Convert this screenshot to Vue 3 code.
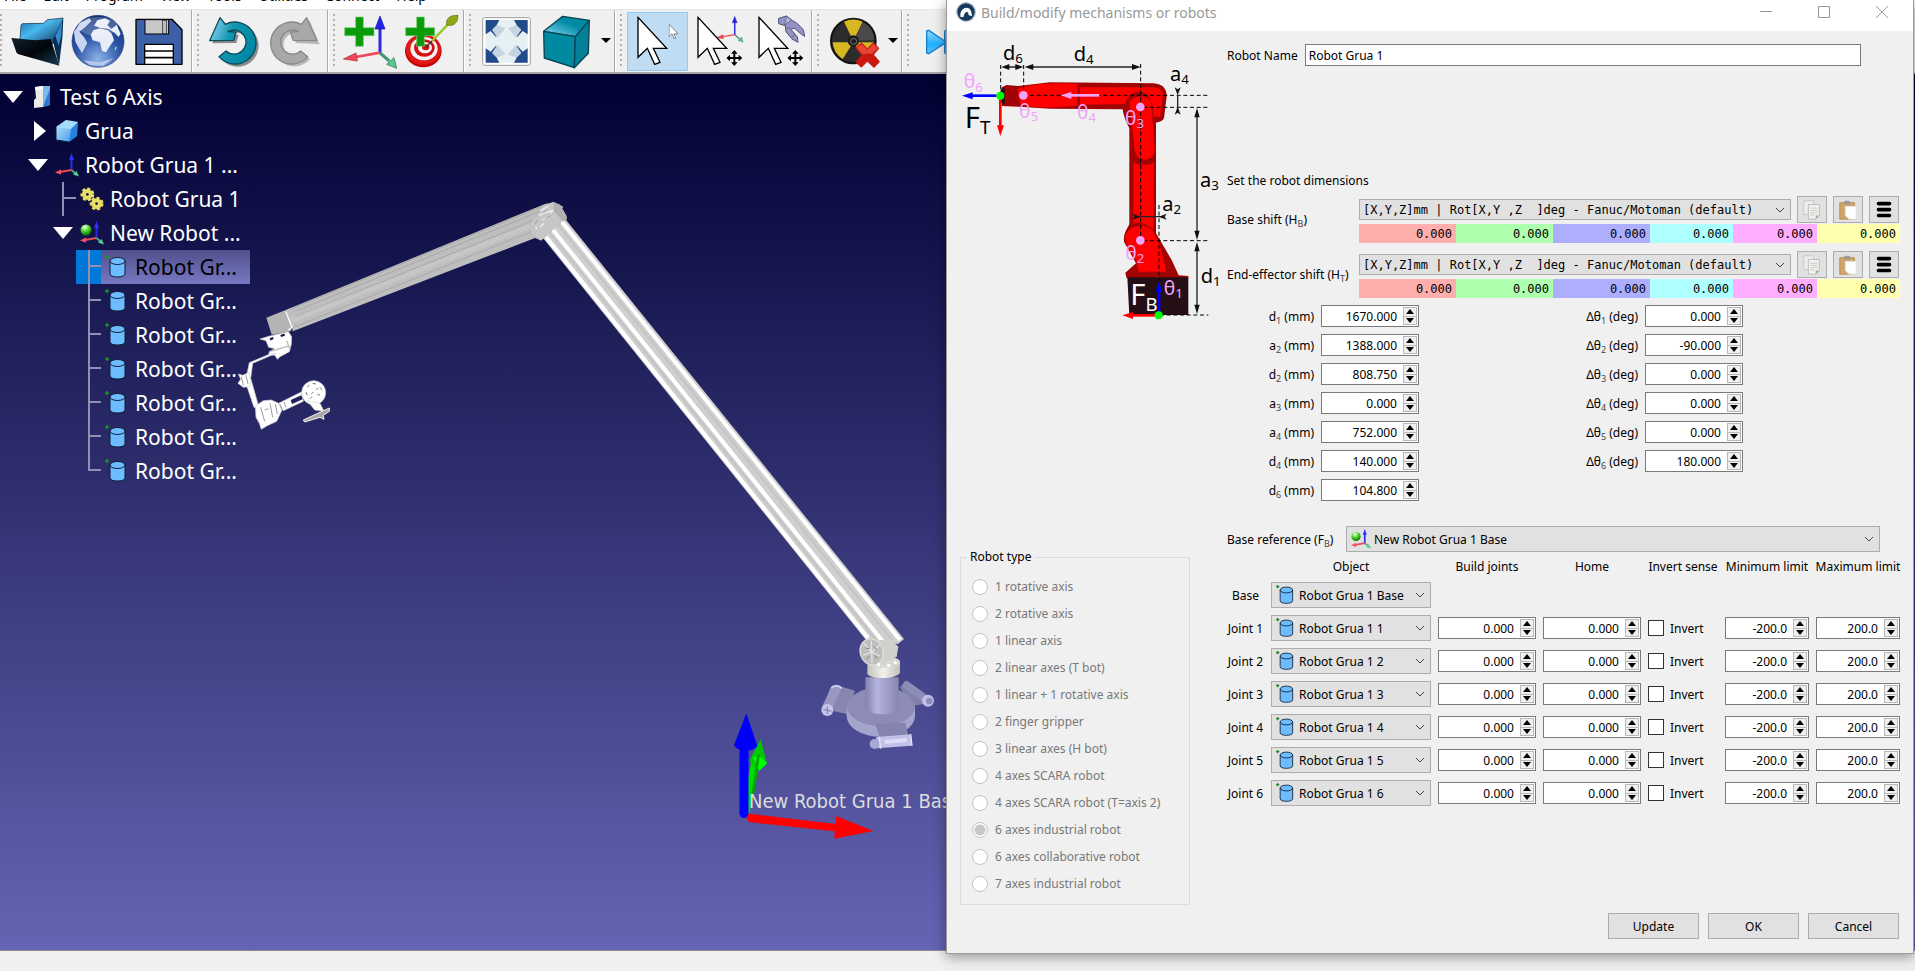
<script setup>
import { ref, reactive } from 'vue'

const menus = ['File', 'Edit', 'Program', 'View', 'Tools', 'Utilities', 'Connect', 'Help']

const toolGroups = [
  { id: 'file', tools: [
    { id: 'open', label: 'Open' },
    { id: 'globe', label: 'Open online library' },
    { id: 'save', label: 'Save station' }] },
  { id: 'history', tools: [
    { id: 'undo', label: 'Undo' },
    { id: 'redo', label: 'Redo' }] },
  { id: 'add', tools: [
    { id: 'frame', label: 'Add reference frame' },
    { id: 'target', label: 'Add target' }] },
  { id: 'view', tools: [
    { id: 'fit', label: 'Fit all' },
    { id: 'cube', label: 'Isometric view', drop: true }] },
  { id: 'select', tools: [
    { id: 'pick', label: 'Select', active: true },
    { id: 'moveframe', label: 'Move reference frame' },
    { id: 'movetool', label: 'Move tool' }] },
  { id: 'check', tools: [
    { id: 'collision', label: 'Check collisions', drop: true }] },
  { id: 'run', tools: [
    { id: 'fast', label: 'Fast simulation' }] }
]

const tree = [
  { level: 0, arrow: 'down', icon: 'station', text: 'Test 6 Axis' },
  { level: 1, arrow: 'right', icon: 'part', text: 'Grua' },
  { level: 1, arrow: 'down', icon: 'axes', text: 'Robot Grua 1 ...' },
  { level: 2, branch: 'tee', icon: 'gears', text: 'Robot Grua 1' },
  { level: 2, arrow: 'down', icon: 'baseframe', text: 'New Robot ...' },
  { level: 3, branch: 'tee', icon: 'cyl', text: 'Robot Gr...', selected: true },
  { level: 3, branch: 'tee', icon: 'cyl', text: 'Robot Gr...' },
  { level: 3, branch: 'tee', icon: 'cyl', text: 'Robot Gr...' },
  { level: 3, branch: 'tee', icon: 'cyl', text: 'Robot Gr...' },
  { level: 3, branch: 'tee', icon: 'cyl', text: 'Robot Gr...' },
  { level: 3, branch: 'tee', icon: 'cyl', text: 'Robot Gr...' },
  { level: 3, branch: 'end', icon: 'cyl', text: 'Robot Gr...' }
]

const robotTypes = [
  '1 rotative axis', '2 rotative axis', '1 linear axis', '2 linear axes (T bot)',
  '1 linear + 1 rotative axis', '2 finger gripper', '3 linear axes (H bot)',
  '4 axes SCARA robot', '4 axes SCARA robot (T=axis 2)', '6 axes industrial robot',
  '6 axes collaborative robot', '7 axes industrial robot'
]
const robotType = ref('6 axes industrial robot')
const robotName = ref('Robot Grua 1')

const poseFormat = '[X,Y,Z]mm | Rot[X,Y ,Z\u00a0\u00a0]deg - Fanuc/Motoman (default)'
const shifts = reactive([
  { id: 'hb', name: 'Base shift', sym: 'H', sub: 'B', values: Array(6).fill('0.000') },
  { id: 'ht', name: 'End-effector shift', sym: 'H', sub: 'T', values: Array(6).fill('0.000') }
])

const lengths = reactive([
  { sym: 'd', sub: '1', value: '1670.000' },
  { sym: 'a', sub: '2', value: '1388.000' },
  { sym: 'd', sub: '2', value: '808.750' },
  { sym: 'a', sub: '3', value: '0.000' },
  { sym: 'a', sub: '4', value: '752.000' },
  { sym: 'd', sub: '4', value: '140.000' },
  { sym: 'd', sub: '6', value: '104.800' }
])
const angles = reactive([
  { sub: '1', value: '0.000' },
  { sub: '2', value: '-90.000' },
  { sub: '3', value: '0.000' },
  { sub: '4', value: '0.000' },
  { sub: '5', value: '0.000' },
  { sub: '6', value: '180.000' }
])

const joints = reactive([1, 2, 3, 4, 5, 6].map(n => ({
  n, object: 'Robot Grua 1 ' + n, build: '0.000', home: '0.000', invert: false, min: '-200.0', max: '200.0'
})))

function step(row, key, by) {
  const digits = (row[key].split('.')[1] || '').length
  row[key] = (parseFloat(row[key]) + by).toFixed(digits)
}
</script>

<template>
  <div class="desktop">
    <svg class="sprite" width="0" height="0" aria-hidden="true">
      <defs>
        <linearGradient id="gFolder" x1="0" y1="0" x2="1" y2="1"><stop offset="0" stop-color="#1b6ba8" /><stop offset=".4" stop-color="#49b8f0" /><stop offset="1" stop-color="#0a2c50" /></linearGradient>
        <linearGradient id="gFront" x1="0" y1="0" x2="1" y2="1"><stop offset="0" stop-color="#123" /><stop offset=".5" stop-color="#020408" /><stop offset="1" stop-color="#173a55" /></linearGradient>
        <radialGradient id="gGlobe" cx=".5" cy=".85" r=".9"><stop offset="0" stop-color="#8fb4e8" /><stop offset=".5" stop-color="#2c55a5" /><stop offset="1" stop-color="#0d2a6c" /></radialGradient>
        <linearGradient id="gUndo" x1="0" y1="0" x2="1" y2=".4"><stop offset="0" stop-color="#9fe0ff" /><stop offset=".5" stop-color="#1296b0" /><stop offset="1" stop-color="#0088a4" /></linearGradient>
        <linearGradient id="gTop" x1="0" y1="1" x2="1" y2="0"><stop offset="0" stop-color="#8fdcff" /><stop offset=".6" stop-color="#008aa4" /></linearGradient>
        <linearGradient id="gPart" x1="0" y1="0" x2="1" y2="1"><stop offset="0" stop-color="#c9ebff" /><stop offset="1" stop-color="#2f8fe6" /></linearGradient>
        <linearGradient id="gPlay" x1="0" y1="0" x2="0" y2="1"><stop offset="0" stop-color="#8fdcff" /><stop offset=".6" stop-color="#21b0ff" /><stop offset="1" stop-color="#5cc6ff" /></linearGradient>
        <radialGradient id="gBall" cx=".4" cy=".25" r=".7"><stop offset="0" stop-color="#fff" /><stop offset=".45" stop-color="#5fe03a" /><stop offset="1" stop-color="#0f7d08" /></radialGradient>
        <linearGradient id="gCyl" x1="0" y1="0" x2="1" y2="0"><stop offset="0" stop-color="#8282ac" /><stop offset=".35" stop-color="#b4b4de" /><stop offset="1" stop-color="#8686ae" /></linearGradient>
        <linearGradient id="gCollar" x1="0" y1="0" x2="1" y2="0"><stop offset="0" stop-color="#c4c4bc" /><stop offset=".5" stop-color="#f2f2ee" /><stop offset="1" stop-color="#c0c0b8" /></linearGradient>
      </defs>

      <symbol id="t-open" viewBox="21 33 183 177">
        <path d="M63 72 67 68 130 67 142 56 189 51 184 120 150 130 60 116Z" fill="url(#gFolder)" stroke="#0a2540" stroke-width="2" />
        <path d="M158 116 189 54 187 110 177 194 166 150Z" fill="#0c2c50" />
        <path d="M166 104 186 62 184 104 176 134Z" fill="#3488cc" />
        <path d="M34 111 60 113 104 118 152 114 178 194 56 160 50 156Z" fill="url(#gFront)" />
      </symbol>
      <symbol id="t-globe" viewBox="204 33 183 177">
        <circle cx="294" cy="121" r="78" fill="url(#gGlobe)" stroke="#1b3a86" stroke-width="2" />
        <path d="M272 102 280 88 300 82 324 88 336 100 342 118 330 134 318 154 306 150 300 124 278 118Z" fill="#e8ecf8" />
        <path d="M282 74 292 58 316 52 330 60 322 72 334 84 350 72 362 98 356 108 344 96 326 84 300 80Z" fill="#e8ecf8" />
        <path d="M222 92 240 66 268 52 274 60 256 78 238 92 252 108 262 126 246 156 236 140 226 122Z" fill="#c8d4f0" />
        <path d="M344 140 352 136 346 150ZM250 178 300 184 340 172 310 194 270 192Z" fill="#b8c8ea" />
        <ellipse cx="294" cy="76" rx="60" ry="28" fill="#fff" opacity=".22" />
      </symbol>
      <symbol id="t-save" viewBox="387 33 183 177">
        <path d="M408 55H516L546 86V190H408Z" fill="#3c60a8" stroke="#000" stroke-width="4" stroke-linejoin="round" />
        <rect x="435" y="56" width="71" height="43" fill="#c8c8c8" stroke="#000" stroke-width="3" />
        <rect x="487" y="58" width="13" height="39" fill="#bbb" stroke="#222" stroke-width="2" />
        <path d="M434 130H520V190H434Z" fill="#fff" stroke="#000" stroke-width="4" />
        <path d="M434 150H520M434 170H520" stroke="#000" stroke-width="5" />
      </symbol>
      <symbol id="t-undo" viewBox="612 33 183 177">
        <path d="M629 119 660 50 676 70A63 63 0 1 1 657 167L678 150A36 36 0 1 0 684 92L708 93 701 118Z" fill="#8a8a8a" transform="translate(8 8)" />
        <path d="M629 119 660 50 676 70A63 63 0 1 1 657 167L678 150A36 36 0 1 0 684 92L708 93 701 118Z" fill="url(#gUndo)" stroke="#0a4c5c" stroke-width="4" stroke-linejoin="round" />
      </symbol>
      <symbol id="t-redo" viewBox="795 33 183 177">
        <path d="M959 130 928 58 912 77A63 63 0 1 0 930 175L912 157A36 36 0 1 1 904 100L880 100 887 126Z" fill="#b8b8b8" />
        <path d="M951 119 920 50 904 70A63 63 0 1 0 923 167L902 150A36 36 0 1 1 896 92L872 93 879 118Z" fill="#a8a8a8" stroke="#888" stroke-width="4" stroke-linejoin="round" />
      </symbol>
      <symbol id="triad" viewBox="1020 33 183 177">
        <path d="M1140 158V76" stroke="#2b2be0" stroke-width="9" /><path d="M1140 45 1155 84H1125Z" fill="#2424e8" stroke="#1414a0" stroke-width="2" />
        <path d="M1140 155 1068 168" stroke="#f04858" stroke-width="8" /><path d="M1030 174 1068 156 1072 180Z" fill="#f04858" stroke="#a02030" stroke-width="2" />
        <path d="M1140 156 1168 180" stroke="#3f9a70" stroke-width="9" /><path d="M1190 202 1160 190 1182 170Z" fill="#58c890" stroke="#1f6a48" stroke-width="2" />
      </symbol>
      <symbol id="t-frame" viewBox="1020 33 183 177">
        <use href="#triad" x="1020" y="33" width="183" height="177" />
        <path d="M1067 48H1090V80H1122V104H1090V136H1067V104H1034V80H1067Z" fill="#0a9a0a" stroke="#6fd06f" stroke-width="2" />
      </symbol>
      <symbol id="t-target" viewBox="1203 33 183 177">
        <ellipse cx="1270" cy="150" rx="55" ry="49" fill="#c80000" />
        <ellipse cx="1270" cy="145" rx="53" ry="46" fill="#e01818" />
        <ellipse cx="1272" cy="143" rx="41" ry="35" fill="#f4f4f4" />
        <ellipse cx="1273" cy="141" rx="31" ry="26" fill="#d41010" />
        <ellipse cx="1275" cy="140" rx="21" ry="17" fill="#f4f4f4" />
        <ellipse cx="1277" cy="139" rx="11" ry="9" fill="#d41010" />
        <path d="M1250 48H1273V80H1304V104H1273V136H1250V104H1217V80H1250Z" fill="#0a9a0a" stroke="#6fd06f" stroke-width="2" />
        <path d="M1276 140 1300 116" stroke="#333" stroke-width="4" /><path d="M1296 120 1346 68" stroke="#9ac820" stroke-width="7" />
        <path d="M1340 72C1336 50 1354 42 1374 43C1374 62 1364 78 1340 72Z" fill="#8fa818" stroke="#5a6c10" stroke-width="2" />
      </symbol>
      <symbol id="t-fit" viewBox="18 33 183 177">
        <rect x="38" y="50" width="143" height="143" rx="6" fill="#fff" stroke="#a0a0a0" stroke-width="3" />
        <rect x="47" y="57" width="126" height="128" fill="#e6f0f2" />
        <path d="M47 57H88L80 72 96 88 78 108 62 90 47 100ZM173 57H132L140 72 124 88 142 108 158 90 173 100ZM47 185H88L80 170 96 154 78 134 62 152 47 142ZM173 185H132L140 170 124 154 142 134 158 152 173 142Z" fill="#204a8a" />
        <path d="M80 72 66 86 82 110 106 82ZM140 72 154 86 138 110 114 82ZM80 170 66 156 82 132 106 160ZM140 170 154 156 138 132 114 160Z" fill="#c4d4e2" />
      </symbol>
      <symbol id="t-cube" viewBox="201 33 183 177">
        <g stroke="#0a4450" stroke-width="4" stroke-linejoin="round">
          <path d="M221 91 278 46 358 58 316 107Z" fill="url(#gTop)" />
          <path d="M221 91 316 107 313 200 223 171Z" fill="#008aa2" />
          <path d="M316 107 358 58 355 157 313 200Z" fill="#048098" />
        </g>
      </symbol>
      <symbol id="pointer" viewBox="0 0 100 150">
        <path d="M4 3V123L32 96 54 144 70 138 50 96H90Z" fill="#fff" stroke="#000" stroke-width="4" />
      </symbol>
      <symbol id="mover" viewBox="0 0 48 48">
        <path d="M24 0 34 11H27V21H37V14L48 24 37 34V27H27V37H34L24 48 14 37H21V27H11V34L0 24 11 14V21H21V11H14Z" />
      </symbol>
      <symbol id="t-pick" viewBox="471 33 183 177">
        <use href="#pointer" x="500" y="46" width="100" height="150" />
        <use href="#pointer" x="596" y="69" width="31" height="46" />
      </symbol>
      <symbol id="t-moveframe" viewBox="654 33 183 177">
        <use href="#triad" x="734" y="40" width="92" height="88" />
        <use href="#pointer" x="680" y="46" width="100" height="150" />
        <use href="#mover" x="769" y="147" width="48" height="48" />
      </symbol>
      <symbol id="t-movetool" viewBox="837 33 183 177">
        <path d="M926 52 950 45 966 58 980 66 1000 86 1004 106 994 100 974 82 962 84 982 108 984 124 966 114 948 92 946 74 926 68Z" fill="#9494c4" stroke="#50507c" stroke-width="3" />
        <path d="M950 46 964 58 944 72ZM950 82 960 80M974 100 966 108" fill="#b8b8dc" stroke="#50507c" stroke-width="2" />
        <use href="#pointer" x="863" y="46" width="100" height="150" />
        <use href="#mover" x="952" y="147" width="48" height="48" />
      </symbol>
      <symbol id="t-collision" viewBox="1062 33 183 177">
        <circle cx="1150" cy="120" r="67" fill="#2c2c2c" stroke="#111" stroke-width="6" />
        <path d="M1150 120 1122 62A64 64 0 0 1 1178 62ZM1150 124 1088 124A64 64 0 0 0 1118 174ZM1150 124 1212 124A64 64 0 0 1 1182 174Z" fill="#d8b820" />
        <path d="M1150 120 1180 64A62 62 0 0 1 1212 118Z" fill="#4a4a4a" />
        <circle cx="1150" cy="120" r="17" fill="#1c1c1c" /><circle cx="1151" cy="121" r="9" fill="none" stroke="#777" stroke-width="3" />
        <path d="M1156 140 1174 124 1192 142 1210 124 1228 142 1212 161 1230 182 1212 201 1192 182 1174 200 1156 184 1174 162Z" fill="#c81810" />
        <path d="M1160 140 1174 128 1192 146 1210 128 1224 142 1206 158H1176Z" fill="#e84438" />
      </symbol>
      <symbol id="t-fast" viewBox="1332 33 183 177">
        <path d="M1370 90 1376 88 1424 120V127L1376 158 1370 156Z" fill="url(#gPlay)" stroke="#1680d0" stroke-width="4" />
        <rect x="1424" y="88" width="24" height="70" rx="4" fill="url(#gPlay)" stroke="#1680d0" stroke-width="4" />
      </symbol>

      <symbol id="i-station" viewBox="0 0 24 24">
        <path d="M5 2 13 1V22L4 23V15L6 13Z" fill="#eceae6" /><path d="M5 2 13 1V4L5 5Z" fill="#fff" />
        <path d="M13 1H20V20L13 22Z" fill="#7ab8f0" /><path d="M16 14 20 4V20L13 22Z" fill="#2a78d0" />
      </symbol>
      <symbol id="i-part" viewBox="0 0 24 24">
        <path d="M1 8 11 1 23 3 22 17 14 23 1 21Z" fill="url(#gPart)" stroke="#0a1c38" />
        <path d="M1 8 11 1 23 3 16 10Z" fill="#a8dcff" /><path d="M16 10 23 3 22 17 14 23Z" fill="#2484e0" />
      </symbol>
      <symbol id="i-axes" viewBox="0 0 24 24">
        <path d="M16.500 18V6" stroke="#2a2ae8" stroke-width="2" /><path d="M16.500 0 19 7H14Z" fill="#3030f8" />
        <path d="M16.500 17 5 19" stroke="#f04858" stroke-width="2" /><path d="M0 19.500 6 16.500V21.500Z" fill="#ff5060" />
        <path d="M16.500 17 20 20" stroke="#48a878" stroke-width="2" /><path d="M24 23.500 18 21.500 21.500 18Z" fill="#58d090" />
      </symbol>
      <symbol id="i-baseframe" viewBox="0 0 24 24">
        <use href="#i-axes" width="24" height="24" /><circle cx="6" cy="9" r="5.500" fill="url(#gBall)" />
      </symbol>
      <symbol id="i-gears" viewBox="0 0 26 26">
        <g fill="#e6de68" stroke="#6a6414" stroke-width=".5">
          <circle cx="8" cy="8" r="6" /><circle cx="18" cy="18" r="6" />
        </g>
        <g fill="none" stroke="#e6de68" stroke-width="3" stroke-dasharray="3 2.500">
          <circle cx="8" cy="8" r="6" /><circle cx="18" cy="18" r="6" />
        </g>
        <g fill="#14144c"><circle cx="8" cy="8" r="1.500" /><circle cx="18" cy="18" r="1.500" /></g>
      </symbol>
      <symbol id="i-cyl" viewBox="0 0 24 24">
        <path d="M5 6V19C5 23 20 23 20 19V6" fill="#6cbcff" stroke="#0c1c30" />
        <ellipse cx="12.500" cy="6" rx="7.500" ry="3.500" fill="#6cbcff" stroke="#0c1c30" />
        <path d="M0 2H4M2 0V4" stroke="#18902c" stroke-width="1.500" />
      </symbol>
      <symbol id="i-copy" viewBox="0 0 24 24">
        <path d="M3 2H14V17H3Z" fill="#eee" stroke="#c4c4c4" /><path d="M8 6H20V18L16 22H8Z" fill="#f2f2ee" stroke="#b8b8b4" />
        <path d="M10 10H18M10 12.500H18M10 15H18M10 17.500H15" stroke="#c4c4c4" /><path d="M20 18H16V22Z" fill="#aaa" />
      </symbol>
      <symbol id="i-paste" viewBox="0 0 24 24">
        <path d="M3 4H19V22H3Z" fill="#d0a468" stroke="#b88c50" /><path d="M8 2H14V6H8Z" fill="#999" />
        <path d="M9 8H21V22H13L9 18Z" fill="#fff" stroke="#ddd" />
      </symbol>
      <symbol id="i-lines" viewBox="0 0 24 24">
        <path d="M6 5H18M6 11.500H18M6 18H18" stroke="#000" stroke-width="4" stroke-linecap="round" />
      </symbol>
    </svg>

    <div class="main">
      <nav class="menubar">
        <button v-for="m in menus" :key="m" type="button">{{ m }}</button>
      </nav>

      <div class="toolbar">
        <div v-for="g in toolGroups" :key="g.id" class="group">
          <span class="handle"></span>
          <button v-for="t in g.tools" :key="t.id" type="button" class="tool" :class="{ active: t.active, drop: t.drop }" :aria-label="t.label">
            <svg class="tool-icon" aria-hidden="true"><use :href="'#t-' + t.id" /></svg>
            <svg v-if="t.drop" class="tool-drop" viewBox="0 0 10 6" aria-hidden="true"><path d="M0 0H10L5 5Z" /></svg>
          </button>
        </div>
      </div>

      <section class="viewport">
        <svg class="scene" viewBox="0 74 946 876" aria-label="Robot Grua 1">
          <g transform="translate(220 190) scale(.333333)">
            <path d="M139 383 197 360 216 412 212 424 155 434Z" fill="#b4b4b4" />
            <path d="M197 360 975 42 1000 37 1030 50 960 150 945 144 218 424 216 412Z" fill="#bebebe" />
            <path d="M230 362 960 64M215 356 965 50M226 380 940 92M220 412 935 124" stroke="#a8a8a8" stroke-width="3" fill="none" />
            <path d="M216 392 930 108" stroke="#c6c6c6" stroke-width="14" />
            <path d="M197 364 216 412 205 420" stroke="#fff" stroke-width="4" fill="none" />
            <path d="M968 50 1000 36 1020 44 1040 78 1038 98 962 152 935 130 932 100 950 80Z" fill="#c6c6c6" />
            <path d="M1003 37 1022 46 1041 84 1034 98 1000 62Z" fill="#b0b0b0" />
            <path d="M962 62 986 48M956 76 1000 60M966 90 984 82M990 70 1000 62M944 102 950 118M972 100 960 112" stroke="#ececec" stroke-width="4" fill="none" />
            <path d="M970 70 980 60M950 92 944 110M976 86 990 78" stroke="#858585" stroke-width="2" fill="none" />
            <g fill="#fff" stroke="#d2d2d2" stroke-width="2">
              <path d="M120 447 150 438 205 425 215 440 214 462 208 485 180 500 172 508 165 496 146 494 148 485 165 476 146 472 138 452Z" />
              <path d="M168 490 98 520 92 565 118 656 102 652 76 575 88 518 150 492Z" />
              <path d="M55 552 68 556 86 548 92 572 90 590 70 592 54 580 62 568Z" />
              <path d="M106 648 130 632 154 630 176 640 186 660 170 694 140 708 124 718 118 700 108 682Z" />
              <path d="M176 640 244 606 250 634 190 662Z" />
              <circle cx="281" cy="608" r="36" />
              <path d="M262 632 300 640 312 664 284 660Z" />
            </g>
            <path d="M212 630 244 616 248 628 216 642Z" fill="#20205c" />
            <path d="M250 690 328 654 328 664 310 676 312 688 300 682 254 696Z" fill="#a8a8a4" stroke="#eee" stroke-width="3" />
            <path d="M150 448 160 444M182 438 194 434" stroke="#1a1a50" stroke-width="7" />
            <path d="M262 590 268 586M278 580 288 582M300 592 306 600M258 606 262 616M274 612 280 606M292 612 300 616M270 626 276 620M290 600 294 594" stroke="#777" stroke-width="3" />
            <path d="M122 652 134 694M150 640 158 682M166 642 172 672M134 660 146 656M180 642 186 658M192 636 198 652M64 560 70 586M78 556 84 582" stroke="#9a9a9a" stroke-width="3" />
            <path d="M200 452 210 478M152 484 206 468" stroke="#c0c0c0" stroke-width="4" />
          </g>
          <path d="M543 238 566 220 904 639 898 644 866 640Z" fill="#cfcfcf" />
          <path d="M546 237 868 638M553 230 884 643M562 222 900 640" stroke="#fff" stroke-width="4" />
          <path d="M549 232 876 640M558 225 892 640" stroke="#c4c4c4" stroke-width="2" />

          <g transform="translate(710 600) scale(.333333)">
            <path d="M360 265 380 256 435 272 410 342 372 334 345 320Z" fill="#8686b0" />
            <path d="M570 262 588 242 650 290 640 312 606 318Z" fill="#8080aa" />
            <path d="M410 320V348A102 62 0 0 0 615 348V320Z" fill="#a4a4cc" />
            <ellipse cx="513" cy="320" rx="102" ry="58" fill="#8c8cb6" />
            <path d="M496 372 586 368 596 412 510 416Z" fill="#8484ae" />
            <path d="M466 232V322C480 350 555 350 566 322V232Z" fill="url(#gCyl)" />
            <path d="M472 186V222C485 240 560 238 570 218V182Z" fill="url(#gCollar)" />
            <ellipse cx="521" cy="186" rx="49" ry="17" fill="#d8d8d2" />
            <path d="M500 120 545 120 565 140 560 170 520 190 490 170Z" fill="#d0d0cc" />
            <ellipse cx="485" cy="156" rx="34" ry="40" transform="rotate(-22 485 156)" fill="#bebebc" stroke="#dededa" stroke-width="4" />
            <path d="M485 156 462 130M485 156 508 136M485 156 460 166M485 156 486 190M485 156 510 168M484 156 484 122" stroke="#e4e4e4" stroke-width="4" />
            <path d="M478 146 466 144M492 140 500 150M478 168 470 178M494 166 502 176" stroke="#888" stroke-width="3" />
            <circle cx="506" cy="194" r="5" fill="#fff" /><circle cx="536" cy="196" r="5" fill="#fff" /><circle cx="556" cy="188" r="5" fill="#fff" />
            <path d="M376 270 352 322" stroke="#9898c2" stroke-width="30" stroke-linecap="round" />
            <path d="M364 264C370 255 390 255 395 266" stroke="#d0d0f4" stroke-width="5" fill="none" />
            <circle cx="352" cy="330" r="18" fill="#c4c4ec" /><path d="M340 328 364 334M352 320V342" stroke="#7878a4" stroke-width="3" />
            <path d="M590 256 640 292" stroke="#8c8cb6" stroke-width="24" stroke-linecap="round" />
            <circle cx="654" cy="302" r="18" fill="#c0c0ea" /><circle cx="658" cy="303" r="10" fill="#8e8eb8" />
            <path d="M500 428 604 420" stroke="#c0c0e8" stroke-width="34" /><circle cx="494" cy="432" r="15" fill="#a8a8d4" />
            <path d="M508 410 512 446M602 402 606 438" stroke="#e4e4fc" stroke-width="4" />
            <path d="M524 426 590 420" stroke="#dcdcf8" stroke-width="12" />
            <path d="M106 640 140 466" stroke="#00dc00" stroke-width="24" />
            <path d="M152 418 171 490 148 512 118 482Z" fill="#00c800" /><path d="M148 512 171 490 150 470 128 470Z" fill="#00ff00" />
            <path d="M126 600 146 462" stroke="#00a800" stroke-width="8" />
            <path d="M102 640V450" stroke="#0000ff" stroke-width="27" stroke-linecap="round" />
            <path d="M109 340 142 438C130 456 84 458 72 436Z" fill="#0000f4" />
            <path d="M104 640 378 672 378 648 490 693 373 716 374 694 116 666Z" fill="#ff0000" />
            <circle cx="102" cy="640" r="13" fill="#0000ff" />
          </g>
          <text x="749" y="808" class="scene-label">New Robot Grua 1 Base</text>
        </svg>

        <ul class="tree">
          <li v-for="(n, i) in tree" :key="i" :class="['node', 'lvl' + n.level, { selected: n.selected }]">
            <span class="twig" :class="n.branch">
              <svg v-if="n.arrow" viewBox="0 0 20 20" aria-hidden="true">
                <path :d="n.arrow === 'down' ? 'M0 4H20L10 16Z' : 'M6 0 18 10 6 20Z'" fill="#fff" />
              </svg>
            </span>
            <span class="face">
              <svg class="node-icon" aria-hidden="true"><use :href="'#i-' + n.icon" /></svg>
              <span>{{ n.text }}</span>
            </span>
          </li>
        </ul>
      </section>
      <footer class="status"></footer>
    </div>

    <section class="dialog" role="dialog" aria-labelledby="dlg-title">
      <header class="titlebar">
        <svg class="logo" viewBox="0 0 60 60" aria-hidden="true">
          <circle cx="30" cy="30" r="28" fill="#173a5c" stroke="#b4c0cc" stroke-width="4" />
          <path d="M13 44C12 28 20 17 32 17C42 17 47 26 48 42L38 40C38 32 35 29 31 30C26 32 24 38 22 46Z" fill="#fff" />
        </svg>
        <h1 id="dlg-title">Build/modify mechanisms or robots</h1>
        <div class="winbtns">
          <button type="button" aria-label="Minimize"><svg viewBox="0 0 14 14"><path d="M1 6.500H13" /></svg></button>
          <button type="button" aria-label="Maximize"><svg viewBox="0 0 14 14"><path d="M1.500 1.500H12.500V12.500H1.500Z" /></svg></button>
          <button type="button" aria-label="Close"><svg viewBox="0 0 14 14"><path d="M1 1 13 13M13 1 1 13" /></svg></button>
        </div>
      </header>

      <div class="content">
        <div class="left">
          <svg class="diagram" viewBox="12 105 810 870" aria-label="Robot dimensions diagram">
            <g>
              <path d="M185 262 200 255 235 258 330 247 640 250C668 252 680 265 680 290L672 355C664 368 652 366 648 368V700L695 780 716 826 745 828V835H560L556 818 588 790 552 725C550 700 560 690 568 672V385C556 360 550 345 548 328L330 326 236 320 186 318Z" fill="#a00404" />
              <path d="M232 268C260 254 330 248 412 252V316C340 326 270 324 240 312Z" fill="#ff0000" />
              <path d="M420 262H640C662 264 670 272 668 290L660 350H640C640 296 620 276 600 276C572 276 560 292 556 312L420 314Z" fill="#ff0000" />
              <path d="M568 310C572 284 630 282 634 310L644 450C642 488 588 488 584 450Z" fill="#ff0000" />
              <path d="M580 488C600 498 624 496 642 488L640 690C620 668 590 664 580 672Z" fill="#ff0000" />
              <path d="M556 708C566 676 610 668 636 690C654 712 672 770 678 815H596L588 780C576 760 558 744 556 708Z" fill="#ff0000" />
              <path d="M562 832H745V945H568Z" fill="#241014" />
              <path d="M182 268 194 262V312L182 308Z" fill="#1c1010" />
            </g>
            <g stroke="#000" stroke-width="3" stroke-dasharray="12 8" fill="none">
              <path d="M182 195V285M251 195V275M602 192V330M602 335V715M250 286H805M610 322H805M610 722H805M657 615V840M660 945H805" />
            </g>
            <g stroke="#222" stroke-width="4" fill="none">
              <path d="M200 201H236M270 201H590M713 285V322M771 340V710M771 740V930M590 650H670" />
            </g>
            <path d="M184 201 208 192V210ZM250 201 226 192V210ZM254 201 280 192V210ZM602 201 576 192V210ZM713 286 704 262 713 268 722 262ZM713 320 704 344 713 338 722 344ZM771 324 763 352H779ZM771 720 763 692H779ZM771 726 763 754H779ZM771 942 763 914H779ZM602 650 578 641 584 650 578 659ZM656 650 680 641 674 650 680 659Z" fill="#111" />
            <path d="M170 287H90" stroke="#00f" stroke-width="8" /><path d="M66 287 98 277V298Z" fill="#00f" />
            <path d="M181 296V385" stroke="#f00" stroke-width="8" /><path d="M181 408 171 376H192Z" fill="#f00" />
            <path d="M657 940V870" stroke="#00f" stroke-width="8" /><path d="M657 844 647 876H667Z" fill="#00f" />
            <path d="M650 946H575" stroke="#f00" stroke-width="8" /><path d="M547 946 579 936V957Z" fill="#f00" />
            <path d="M478 286H390" stroke="#f4a4fc" stroke-width="8" /><path d="M362 286 394 276V297Z" fill="#f4a4fc" />
            <g fill="#0f0"><circle cx="181" cy="287" r="12" /><circle cx="656" cy="946" r="12" /></g>
            <g fill="#f4a4fc"><circle cx="250" cy="286" r="13" /><circle cx="601" cy="321" r="13" /><circle cx="601" cy="721" r="13" /></g>
            <g class="dim">
              <text x="189" y="180">d<tspan class="sub" dy="10">6</tspan></text>
              <text x="401" y="182">d<tspan class="sub" dy="10">4</tspan></text>
              <text x="690" y="242">a<tspan class="sub" dy="10">4</tspan></text>
              <text x="780" y="560">a<tspan class="sub" dy="10">3</tspan></text>
              <text x="667" y="632">a<tspan class="sub" dy="10">2</tspan></text>
              <text x="782" y="848">d<tspan class="sub" dy="10">1</tspan></text>
            </g>
            <g class="dim theta">
              <text x="71" y="265">θ<tspan class="sub" dy="10">6</tspan></text>
              <text x="237" y="354">θ<tspan class="sub" dy="10">5</tspan></text>
              <text x="411" y="356">θ<tspan class="sub" dy="10">4</tspan></text>
              <text x="555" y="374">θ<tspan class="sub" dy="10">3</tspan></text>
              <text x="556" y="780">θ<tspan class="sub" dy="10">2</tspan></text>
              <text x="671" y="884">θ<tspan class="sub" dy="10">1</tspan></text>
            </g>
            <g class="frame">
              <text x="74" y="383">F<tspan class="fsub" dy="18">T</tspan></text>
              <text x="571" y="914" fill="#fff">F<tspan class="fsub" dy="18">B</tspan></text>
            </g>
          </svg>

          <fieldset class="types" disabled>
            <legend>Robot type</legend>
            <label v-for="t in robotTypes" :key="t" class="type">
              <input v-model="robotType" type="radio" name="robot-type" :value="t" />
              <span>{{ t }}</span>
            </label>
          </fieldset>
        </div>

        <form class="right" @submit.prevent>
          <div class="name-row">
            <label for="robot-name">Robot Name</label>
            <input id="robot-name" v-model="robotName" type="text" />
          </div>

          <p class="section">Set the robot dimensions</p>
          <div class="shifts">
            <template v-for="s in shifts" :key="s.id">
              <label :for="'fmt-' + s.id">{{ s.name }} ({{ s.sym }}<sub>{{ s.sub }}</sub>)</label>
              <div class="shift">
                <div class="shift-top">
                  <div class="combo mono">
                    <select :id="'fmt-' + s.id"><option>{{ poseFormat }}</option></select>
                    <svg class="chev" viewBox="0 0 10 6" aria-hidden="true"><path d="M1 1 5 5 9 1" /></svg>
                  </div>
                  <button type="button" class="sq" aria-label="Copy"><svg><use href="#i-copy" /></svg></button>
                  <button type="button" class="sq" aria-label="Paste"><svg><use href="#i-paste" /></svg></button>
                  <button type="button" class="sq" aria-label="Options"><svg><use href="#i-lines" /></svg></button>
                </div>
                <div class="cells">
                  <input v-for="(v, i) in s.values" :key="i" v-model="s.values[i]" type="text" :class="'c' + i" :aria-label="s.name + ' value ' + (i + 1)" />
                </div>
              </div>
            </template>
          </div>

          <div class="params">
            <div class="param-col">
              <template v-for="(p, i) in lengths" :key="i">
                <label :for="'len' + i">{{ p.sym }}<sub>{{ p.sub }}</sub> (mm)</label>
                <div class="spin">
                  <input :id="'len' + i" v-model="p.value" type="text" />
                  <span class="steps">
                    <button type="button" aria-label="Increase" @click="step(p, 'value', 1)"><svg viewBox="0 0 8 5"><path d="M0 5H8L4 0Z" /></svg></button>
                    <button type="button" aria-label="Decrease" @click="step(p, 'value', -1)"><svg viewBox="0 0 8 5"><path d="M0 0H8L4 5Z" /></svg></button>
                  </span>
                </div>
              </template>
            </div>
            <div class="param-col">
              <template v-for="(p, i) in angles" :key="i">
                <label :for="'ang' + i">Δθ<sub>{{ p.sub }}</sub> (deg)</label>
                <div class="spin">
                  <input :id="'ang' + i" v-model="p.value" type="text" />
                  <span class="steps">
                    <button type="button" aria-label="Increase" @click="step(p, 'value', 1)"><svg viewBox="0 0 8 5"><path d="M0 5H8L4 0Z" /></svg></button>
                    <button type="button" aria-label="Decrease" @click="step(p, 'value', -1)"><svg viewBox="0 0 8 5"><path d="M0 0H8L4 5Z" /></svg></button>
                  </span>
                </div>
              </template>
            </div>
          </div>

          <div class="ref-row">
            <label for="base-ref">Base reference (F<sub>B</sub>)</label>
            <div class="combo iconic">
              <select id="base-ref"><option>New Robot Grua 1 Base</option></select>
              <svg class="combo-icon" aria-hidden="true"><use href="#i-baseframe" /></svg>
              <svg class="chev" viewBox="0 0 10 6" aria-hidden="true"><path d="M1 1 5 5 9 1" /></svg>
            </div>
          </div>

          <div class="joints">
            <span></span><span class="head">Object</span><span class="head">Build joints</span><span class="head">Home</span>
            <span class="head">Invert sense</span><span class="head">Minimum limit</span><span class="head">Maximum limit</span>

            <label for="obj-base" class="jl">Base</label>
            <div class="combo iconic">
              <select id="obj-base"><option>Robot Grua 1 Base</option></select>
              <svg class="combo-icon" aria-hidden="true"><use href="#i-cyl" /></svg>
              <svg class="chev" viewBox="0 0 10 6" aria-hidden="true"><path d="M1 1 5 5 9 1" /></svg>
            </div>
            <span class="blank"></span>

            <template v-for="j in joints" :key="j.n">
              <label :for="'obj' + j.n" class="jl">Joint {{ j.n }}</label>
              <div class="combo iconic">
                <select :id="'obj' + j.n"><option>{{ j.object }}</option></select>
                <svg class="combo-icon" aria-hidden="true"><use href="#i-cyl" /></svg>
                <svg class="chev" viewBox="0 0 10 6" aria-hidden="true"><path d="M1 1 5 5 9 1" /></svg>
              </div>
              <template v-for="key in ['build', 'home', 'invert', 'min', 'max']" :key="key">
                <label v-if="key === 'invert'" class="check"><input v-model="j.invert" type="checkbox" /><span>Invert</span></label>
                <div v-else class="spin">
                  <input v-model="j[key]" type="text" :aria-label="'Joint ' + j.n + ' ' + key" />
                  <span class="steps">
                    <button type="button" aria-label="Increase" @click="step(j, key, 1)"><svg viewBox="0 0 8 5"><path d="M0 5H8L4 0Z" /></svg></button>
                    <button type="button" aria-label="Decrease" @click="step(j, key, -1)"><svg viewBox="0 0 8 5"><path d="M0 0H8L4 5Z" /></svg></button>
                  </span>
                </div>
              </template>
            </template>
          </div>

          <div class="actions">
            <button type="button">Update</button>
            <button type="button">OK</button>
            <button type="button">Cancel</button>
          </div>
        </form>
      </div>
    </section>
  </div>
</template>

<style>
html, body { margin: 0; background: #f0f0f0; }
</style>

<style scoped>
* { box-sizing: border-box; }
button, input, select { font: inherit; color: inherit; margin: 0; }
.desktop { position: relative; min-height: 100vh; overflow: hidden; font-family: "Noto Sans", "Open Sans", sans-serif; font-size: 12px; color: #000; }
.sprite { position: absolute; }
.main { display: flex; flex-direction: column; min-height: 100vh; }

.menubar { display: flex; height: 28px; margin-top: -19px; background: #fff; padding-left: 4px; gap: 17px; }
.menubar button { border: 0; padding: 0; background: none; font-size: 14px; line-height: 30px; }

.toolbar { display: flex; height: 65px; background: #f0f0f0; border-top: 1px solid #e4e4e4; border-bottom: 2px solid #a8a8a8; overflow: hidden; }
.group { display: flex; flex: none; align-items: center; padding: 0 1px 0 4px; border-left: 1px solid #fff; border-right: 1px solid #a8a8a8; }
.group:first-child { padding-left: 0; border-left: 0; }
.handle { width: 2px; height: 54px; margin-right: 5px; background: repeating-linear-gradient(#b0b0b0 0 2px, transparent 2px 5px); }
.tool { display: flex; align-items: center; width: 61px; height: 59px; padding: 0; border: 1px solid transparent; background: none; }
.tool.drop { width: 76px; }
.tool.active { background: #c0dcf3; border-color: #90c8f6; }
.tool-icon { flex: none; width: 61px; height: 59px; margin: -1px; }
.tool-drop { width: 10px; height: 6px; margin-left: 4px; }

.viewport { position: relative; flex: 1; min-height: 877px; background: linear-gradient(#000032, #6464b4); border-bottom: 1px solid #8c8c8c; }
.scene { position: absolute; left: 0; top: 0; width: 946px; height: 876px; }
.scene-label { font: 20px "DejaVu Sans Condensed", "Noto Sans", sans-serif; fill: #dcdcdc; }
.status { height: 20px; background: #f0f0f0; }

.tree { position: relative; list-style: none; margin: 0; padding: 6px 0 0; width: 250px; font-size: 21px; color: #fff; }
.node { display: flex; height: 34px; }
.lvl1 { padding-left: 25px; }
.lvl2 { padding-left: 50px; }
.lvl3 { padding-left: 76px; }
.twig { position: relative; flex: none; display: flex; align-items: center; justify-content: center; width: 26px; }
.twig svg { width: 20px; height: 20px; }
.lvl3 .twig { width: 25px; }
.tee::before, .end::before { content: ""; position: absolute; left: 12px; top: 0; width: 2px; height: 100%; background: #9090b4; }
.end::before { height: 17px; }
.tee::after, .end::after { content: ""; position: absolute; left: 12px; right: 0; top: 15px; height: 2px; background: #9090b4; }
.face { flex: 1; display: flex; align-items: center; gap: 6px; padding-left: 4px; white-space: nowrap; }
.selected .twig { background: #0078d7; }
.selected .face { background: linear-gradient(#50508c, #7878c4); color: #000; }
.node-icon { flex: none; width: 24px; height: 24px; }

.dialog { position: absolute; top: 0; left: 49.4%; right: 1px; min-height: calc(100vh - 17px); display: flex; flex-direction: column; background: #f0f0f0; border: 1px solid #9a9a9a; border-top: 0; box-shadow: 0 3px 12px rgba(0, 0, 0, .4); }
.titlebar { display: flex; align-items: center; height: 31px; padding: 0 2px 7px 9px; background: #fff; }
.logo { width: 20px; height: 20px; }
.titlebar h1 { flex: 1; margin: 0 0 0 5px; font-size: 14px; font-weight: 400; color: #999; }
.winbtns { display: flex; }
.winbtns button { width: 58px; height: 24px; padding: 0; border: 0; background: none; }
.winbtns svg { display: block; margin: 0 auto; width: 14px; height: 14px; fill: none; stroke: #999; }

.content { flex: 1; display: flex; }
.left { flex: none; width: 280px; display: flex; flex-direction: column; padding: 4px 0 48px; }
.diagram { width: 270px; height: 290px; margin-left: -3px; overflow: visible; }
.dim { font-size: 60px; }
.theta { fill: #f0a4f8; font-size: 58px; }
.sub { font-size: 40px; }
.frame { font-size: 88px; }
.fsub { font-size: 56px; }

.types { margin: auto 37px 0 13px; padding: 7px 0 7px 11px; border: 1px solid #dcdcdc; color: #787878; }
.types legend { color: #000; margin-left: -5px; padding: 0 3px; line-height: 18px; }
.type { display: flex; align-items: center; gap: 7px; height: 27px; }
.type input { appearance: none; width: 16px; height: 16px; border: 1px solid #c4c4c4; border-radius: 50%; background: #fff; }
.type input:checked { background: radial-gradient(circle, #c8c8c8 5px, #fff 6px); }

.right { flex: 1; min-width: 0; display: flex; flex-direction: column; padding: 13px 13px 14px 0; }
.right label { white-space: nowrap; }
sub { font-size: 9px; line-height: 0; vertical-align: -3px; color: #444; }
.name-row { display: flex; align-items: center; gap: 7px; margin-right: 39px; }
.name-row label { flex: 0 0 70px; }
.name-row input { flex: 1; height: 22px; padding: 0 3px; border: 1px solid #7a7a7a; background: #fff; }
.section { margin: 106px 0 6px; line-height: 18px; }

.shifts { display: grid; grid-template-columns: 125px minmax(0, 1fr); gap: 8px 7px; align-items: center; }
.shift-top { display: flex; align-items: center; gap: 6px; padding-right: 1px; }
.combo { position: relative; display: flex; flex: 1; min-width: 0; height: 26px; }
.combo select { appearance: none; width: 100%; border: 1px solid #adadad; border-radius: 0; background: #e1e1e1; padding: 0 20px 0 4px; }
.combo.iconic select { padding-left: 27px; }
.combo-icon { position: absolute; left: 5px; top: 3px; width: 20px; height: 20px; pointer-events: none; }
.chev { position: absolute; right: 6px; top: 50%; width: 10px; height: 6px; margin-top: -3px; fill: none; stroke: #444; pointer-events: none; }
.mono { height: 21px; font-family: "DejaVu Sans Mono", "Liberation Mono", monospace; }
.mono select { padding-left: 3px; }
.sq { display: flex; align-items: center; justify-content: center; width: 30px; height: 27px; padding: 0; border: 1px solid #adadad; background: #e1e1e1; }
.sq svg { width: 24px; height: 22px; }
.cells { display: grid; grid-template-columns: 97fr 97fr 97fr 83fr 84fr 83fr; margin-top: 1px; }
.cells input { min-width: 0; width: 100%; height: 19px; border: 0; padding: 0 4px; text-align: right; font-family: "DejaVu Sans Mono", "Liberation Mono", monospace; }
.c0 { background: #ffaeae; }
.c1 { background: #aeffae; }
.c2 { background: #aeaeff; }
.c3 { background: #aeffff; }
.c4 { background: #ffaeff; }
.c5 { background: #ffffae; }

.params { display: flex; margin: 7px 0 0 40px; }
.param-col { flex: 0 0 324px; display: grid; grid-template-columns: 47px 98px; gap: 7px; align-content: start; align-items: center; }
.param-col label { text-align: right; justify-self: end; }
.spin { display: flex; height: 22px; min-width: 0; border: 1px solid #7a7a7a; background: #fff; padding: 1px; }
.spin input { flex: 1; min-width: 0; width: 0; border: 0; padding: 0 6px 0 0; background: none; text-align: right; }
.steps { flex: none; display: flex; flex-direction: column; width: 14px; }
.steps button { flex: 1; min-height: 0; padding: 0; display: flex; align-items: center; justify-content: center; border: 1px solid #b8b8b8; background: #f0f0f0; }
.steps button + button { border-top: 0; }
.steps svg { width: 8px; height: 5px; }

.ref-row { display: flex; align-items: center; gap: 7px; margin: 25px 20px 0 0; }
.ref-row label { flex: 0 0 112px; }
.joints { display: grid; grid-template-columns: 37px minmax(0, 160fr) minmax(0, 98fr) minmax(0, 98fr) minmax(0, 70fr) minmax(0, 84fr) minmax(0, 84fr); gap: 7px; align-items: center; margin-top: 7px; }
.head { text-align: center; white-space: nowrap; line-height: 16px; justify-self: center; }
.jl { text-align: center; }
.blank { grid-column: 3 / -1; }
.check { display: flex; align-items: center; gap: 6px; }
.check input { appearance: none; width: 16px; height: 16px; border: 1px solid #333; background: #fff; }
.actions { display: flex; justify-content: flex-end; gap: 9px; margin: auto 1px 0 0; }
.actions button { width: 91px; height: 26px; padding: 0; border: 1px solid #adadad; background: #e1e1e1; }
</style>
